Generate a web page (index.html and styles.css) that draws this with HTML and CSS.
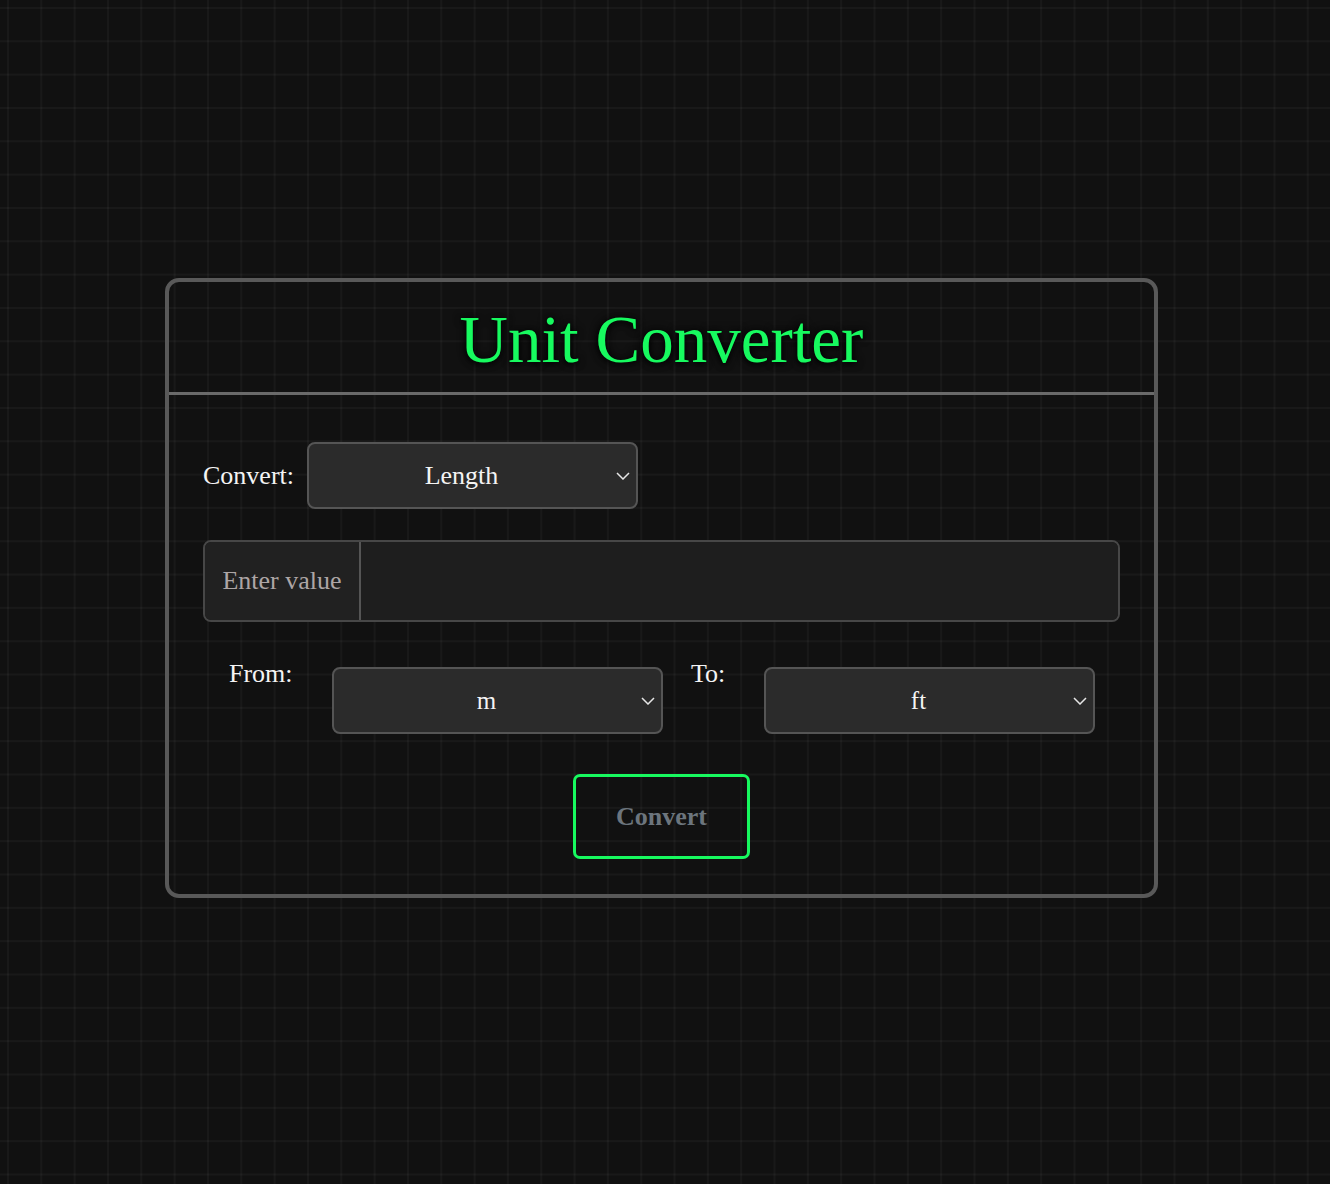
FILE: index.html
```html
<!DOCTYPE html>
<html lang="en">
<head>
<meta charset="utf-8">
<title>Unit Converter</title>
<link rel="stylesheet" href="styles.css">
</head>
<body>
<main class="page">
  <section class="card">
    <header class="card-header">
      <h1 class="title">Unit Converter</h1>
    </header>
    <div class="card-body">
      <div class="row-type">
        <label class="label">Convert:</label>
        <div class="select-wrap select-type">
          <select class="select"><option>Length</option></select>
          <svg class="chev" viewBox="0 0 14 8" width="14" height="8"><path d="M1 1 L7 7 L13 1" fill="none" stroke="#e6e6e6" stroke-width="1.5"/></svg>
        </div>
      </div>
      <div class="input-group">
        <span class="prefix">Enter value</span>
        <input class="field" type="text">
      </div>
      <div class="row-units">
        <label class="label label-from">From:</label>
        <div class="select-wrap select-unit">
          <select class="select select-times"><option>m</option></select>
          <svg class="chev" viewBox="0 0 14 8" width="14" height="8"><path d="M1 1 L7 7 L13 1" fill="none" stroke="#e6e6e6" stroke-width="1.5"/></svg>
        </div>
        <label class="label label-to">To:</label>
        <div class="select-wrap select-unit">
          <select class="select select-times"><option>ft</option></select>
          <svg class="chev" viewBox="0 0 14 8" width="14" height="8"><path d="M1 1 L7 7 L13 1" fill="none" stroke="#e6e6e6" stroke-width="1.5"/></svg>
        </div>
      </div>
      <div class="row-btn">
        <button class="btn" type="button">Convert</button>
      </div>
    </div>
  </section>
</main>
</body>
</html>
```

FILE: styles.css
```css
html, body {
  margin: 0;
  padding: 0;
}
body {
  min-height: 1184px;
  background-color: #111111;
  background-image:
    linear-gradient(to right, rgba(255,255,255,0.035) 2px, transparent 2px),
    linear-gradient(to bottom, rgba(255,255,255,0.035) 2px, transparent 2px);
  background-size: 33.33px 33.33px;
  background-position: 7px 7px;
  font-family: "Liberation Serif", "DejaVu Serif", serif;
  color: #f2f2f2;
}
.page {
  padding-top: 278px;
  padding-left: 165px;
}
.card {
  width: 993px;
  box-sizing: border-box;
  border: 4px solid #595959;
  border-radius: 14px;
}
.card-header {
  height: 110px;
  border-bottom: 3px solid #6a6a6a;
  display: flex;
  justify-content: center;
  align-items: flex-start;
}
.title {
  margin: 17px 0 0 0;
  font-size: 67px;
  font-weight: normal;
  line-height: 80px;
  color: #17fa5f;
  text-shadow: 0 0 8px rgba(0,0,0,0.9), 0 2px 6px rgba(0,0,0,0.8);
  letter-spacing: 0;
}
.card-body {
  padding: 47px 34px 35px 34px;
}
.label {
  font-size: 26px;
  color: #f4f4f4;
}
.row-type {
  display: flex;
  align-items: center;
  gap: 13px;
}
.select-wrap {
  position: relative;
}
.select {
  appearance: none;
  -webkit-appearance: none;
  width: 100%;
  height: 100%;
  box-sizing: border-box;
  background: #2b2b2b;
  border: 2px solid #555555;
  border-radius: 8px;
  color: #f4f4f4;
  font-family: "Liberation Serif", "DejaVu Serif", serif;
  font-size: 26px;
  text-align: center;
  text-align-last: center;
  padding: 0 22px 0 0;
}
.select-times {
  font-size: 25px;
}
.chev {
  position: absolute;
  right: 8px;
  top: 50%;
  margin-top: -4px;
  pointer-events: none;
}
.select-type {
  width: 331px;
  height: 67px;
}
.input-group {
  margin-top: 31px;
  display: flex;
  height: 82px;
  box-sizing: border-box;
  border: 2px solid #474747;
  border-radius: 8px;
  background: #1f1f1f;
  overflow: hidden;
}
.prefix {
  width: 154px;
  flex: none;
  display: flex;
  align-items: center;
  justify-content: center;
  font-size: 26px;
  color: #ada6a6;
  border-right: 2px solid #555555;
  background: #212121;
}
.field {
  flex: 1;
  border: none;
  background: #1e1e1e;
  color: #f4f4f4;
  font-size: 26px;
  outline: none;
}
.row-units {
  margin-top: 45px;
  display: flex;
  align-items: flex-start;
}
.label-from {
  margin-left: 26px;
  margin-top: -8px;
  width: 103px;
}
.label-to {
  margin-left: 28px;
  margin-top: -8px;
  width: 73px;
}
.select-unit {
  width: 331px;
  height: 67px;
}
.row-btn {
  margin-top: 40px;
  display: flex;
  justify-content: center;
}
.btn {
  width: 177px;
  height: 85px;
  box-sizing: border-box;
  background: transparent;
  border: 3px solid #17fa5f;
  border-radius: 7px;
  color: #6c757d;
  font-family: "Liberation Serif", "DejaVu Serif", serif;
  font-weight: bold;
  font-size: 26px;
}
```
